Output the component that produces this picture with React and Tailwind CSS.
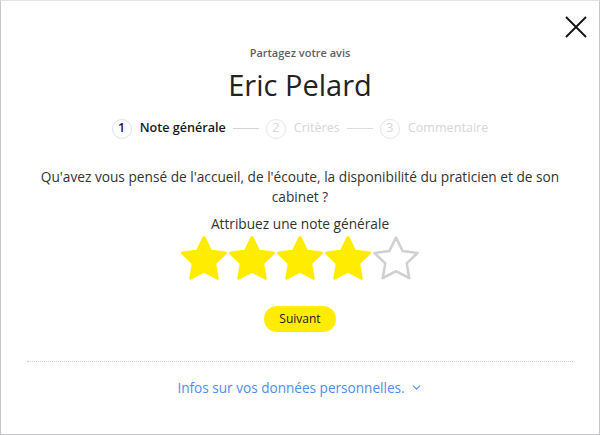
import { ChevronDown } from "lucide-react";

const STAR = "M24 2.5 L30.6 16 L45.5 18 L34.7 28.4 L37.3 43.2 L24 36.2 L10.7 43.2 L13.3 28.4 L2.5 18 L17.4 16 Z";

function Star({ filled }) {
  return (
    <svg width="48" height="48" viewBox="0 0 48 48">
      <path
        d={STAR}
        fill={filled ? "#ffec00" : "none"}
        stroke={filled ? "#ffec00" : "#cfcfd4"}
        strokeWidth={filled ? 3 : 2.5}
        strokeLinejoin="round"
      />
    </svg>
  );
}

function Step({ n, label, active }) {
  return (
    <div className={`flex items-center gap-[8px] ${active ? "text-[#1a1a1a]" : "text-[#d6d6d6]"}`}>
      <span
        className={`w-[20px] h-[20px] rounded-full border flex items-center justify-center text-[12.5px] ${
          active ? "border-[#e2e2e2] font-semibold" : "border-[#e6e6e6]"
        }`}
      >
        {n}
      </span>
      <span className={`text-[12.6px] ${active ? "font-semibold" : ""}`}>{label}</span>
    </div>
  );
}

export default function App() {
  return (
    <div
      className="w-[600px] h-[435px] bg-white border border-[#c5c5ca] border-t-[#e4e4e8] relative flex flex-col items-center"
      style={{ fontFamily: '"Open Sans", sans-serif' }}
    >
      <button className="absolute right-[11px] top-[14px] w-6 h-6 flex items-center justify-center">
        <svg width="22" height="22" viewBox="0 0 22 22">
          <path d="M1 1 L21 21 M21 1 L1 21" stroke="#111" strokeWidth="1.8" />
        </svg>
      </button>

      <div className="mt-[44px] text-[11px] font-semibold text-[#5f5f66]">Partagez votre avis</div>
      <h1 className="mt-[3px] text-[29px] leading-[40px] text-[#222]">Eric Pelard</h1>

      <div className="mt-[14px] flex items-center gap-[7px] h-[20px]">
        <Step n="1" label="Note générale" active />
        <span className="w-[26px] h-px bg-[#d4d4d4]" />
        <Step n="2" label="Critères" />
        <span className="w-[26px] h-px bg-[#dedede]" />
        <Step n="3" label="Commentaire" />
      </div>

      <p className="mt-[28px] w-[540px] text-center text-[13.7px] leading-[20px] text-[#333]">
        Qu'avez vous pensé de l'accueil, de l'écoute, la disponibilité du praticien et de son cabinet ?
      </p>
      <p className="mt-[7px] text-[13.7px] leading-[20px] text-[#333]">Attribuez une note générale</p>

      <div className="mt-[1px] flex gap-0">
        {[1, 2, 3, 4, 5].map((i) => (
          <Star key={i} filled={i <= 4} />
        ))}
      </div>

      <button className="mt-[23px] h-[26px] px-[15px] rounded-full bg-[#ffec00] text-[12px] text-[#1a1a1a] font-medium">
        Suivant
      </button>

      <div className="mt-[29px] w-[546px] border-t border-dotted border-[#cfcfcf]" />

      <div className="mt-[16px] flex items-center gap-[5px] text-[13.6px] leading-[20px] text-[#4d8ef0]">
        <span>Infos sur vos données personnelles.</span>
        <ChevronDown size={13} strokeWidth={2} />
      </div>
    </div>
  );
}
